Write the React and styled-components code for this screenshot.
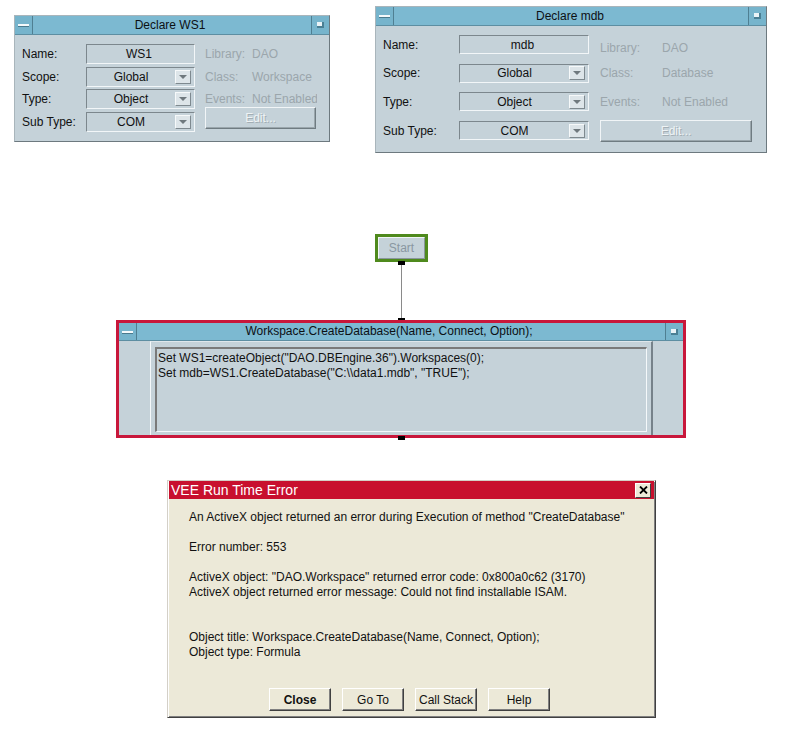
import React from "react";
import styled, { createGlobalStyle } from "styled-components";

const Global = createGlobalStyle`
  html, body { margin: 0; padding: 0; background: #ffffff; }
  * { box-sizing: border-box; }
`;

const Canvas = styled.div`
  position: relative;
  width: 795px;
  height: 746px;
  background: #ffffff;
  overflow: hidden;
  font-family: "Liberation Sans", Arial, sans-serif;
  font-size: 12px;
  color: #101418;
`;

/* Diagram nodes placed on the free VEE canvas */
const Node = styled.div`
  position: absolute;
  left: ${(p) => p.$x}px;
  top: ${(p) => p.$y}px;
  width: ${(p) => p.$w}px;
  height: ${(p) => p.$h}px;
`;

const VeeWindow = styled(Node)`
  display: flex;
  flex-direction: column;
  background: #c5d2d9;
  border: 1px solid;
  border-color: #a9b5bb #6d797f #6d797f #a9b5bb;
`;

const TitleBar = styled.div`
  display: flex;
  align-items: stretch;
  height: ${(p) => p.$h || 19}px;
  flex: none;
  background: #7cb9d1;
  border-bottom: 1px solid #5d8ea2;
`;

const TitleBtn = styled.div`
  width: 18px;
  flex: none;
  display: flex;
  align-items: center;
  justify-content: center;
  background: #76b4cc;
  border-left: ${(p) => (p.$side === "right" ? "1px solid #4f7f92" : "none")};
  border-right: ${(p) => (p.$side === "left" ? "1px solid #4f7f92" : "none")};
`;

const MinusGlyph = styled.span`
  display: block;
  width: 11px;
  height: 2px;
  background: #f4f9fb;
  box-shadow: 0 1px 0 #4a7a8d;
`;

const SquareGlyph = styled.span`
  display: block;
  width: 7px;
  height: 6px;
  background: #e9f3f7;
  border-right: 2px solid #4a7f94;
  border-bottom: 2px solid #4a7f94;
`;

const TitleText = styled.div`
  flex: 1;
  text-align: center;
  line-height: ${(p) => p.$h || 18}px;
  font-size: 12px;
  color: #0c1014;
  white-space: nowrap;
  overflow: hidden;
  padding-right: ${(p) => p.$offset || 0}px;
`;

const DeclareBody = styled.div`
  display: grid;
  grid-template-columns: ${(p) => p.$cols};
  grid-auto-rows: ${(p) => p.$rowH}px;
  row-gap: ${(p) => p.$rowGap}px;
  padding: ${(p) => p.$padTop}px 0 0 7px;
  align-items: center;
`;

const Label = styled.div`
  font-size: 12px;
  color: #111;
  white-space: nowrap;
`;

const Field = styled.div`
  height: 100%;
  display: flex;
  align-items: center;
  border: 1px solid;
  border-color: #7c878d #f2f6f8 #f2f6f8 #7c878d;
  padding-right: 3px;
`;

const FieldText = styled.span`
  flex: 1;
  text-align: center;
  font-size: 12px;
  color: #111;
`;

const DropBtn = styled.span`
  width: 16px;
  height: 14px;
  flex: none;
  display: flex;
  align-items: center;
  justify-content: center;
  background: #dde5e9;
  border: 1px solid;
  border-color: #f6f9fa #7e898f #7e898f #f6f9fa;
`;

const Arrow = styled.span`
  width: 0;
  height: 0;
  border-left: 4px solid transparent;
  border-right: 4px solid transparent;
  border-top: 4px solid #6f797e;
`;

const InfoRow = styled.div`
  display: grid;
  grid-template-columns: ${(p) => p.$labelW}px auto;
  white-space: nowrap;
  overflow: hidden;
  width: ${(p) => p.$w}px;
  color: #9ba6ac;
  font-size: 12px;
  margin-left: ${(p) => p.$ml}px;
  margin-top: ${(p) => p.$mt || 0}px;
`;

const EditBtn = styled.div`
  height: ${(p) => p.$h}px;
  width: ${(p) => p.$w}px;
  margin-left: ${(p) => p.$ml}px;
  margin-top: ${(p) => p.$mt || 0}px;
  align-self: ${(p) => p.$align || "center"};
  display: flex;
  align-items: center;
  justify-content: center;
  border: 1px solid;
  border-color: #f1f5f7 #6f7b81 #6f7b81 #f1f5f7;
  box-shadow: inset -1px -1px 0 #9aa6ac;
  color: #eef3f5;
  text-shadow: 1px 1px 0 #a3aeb4;
  font-size: 12px;
`;

/* Start node */
const StartNode = styled(Node)`
  border: 3px solid #4f8a1d;
  background: #c5d2d9;
  display: flex;
`;

const StartFace = styled.div`
  flex: 1;
  display: flex;
  align-items: center;
  justify-content: center;
  border: 1px solid;
  border-color: #f1f5f7 #8a969c #8a969c #f1f5f7;
  color: #8997a1;
  font-size: 12px;
`;

const Pin = styled(Node)`
  background: #000;
`;

const Wire = styled(Node)`
  background: #8a8a8a;
`;

/* Formula node */
const FormulaNode = styled(Node)`
  border: 3px solid #c8173b;
  background: #c5d2d9;
  display: flex;
  flex-direction: column;
`;

const FormulaBody = styled.div`
  flex: 1;
  display: flex;
  padding: 0 30px 0 31px;
`;

const ContentPanel = styled.div`
  flex: 1;
  display: flex;
  padding: 5px 4px 3px 4px;
  border-left: 1px solid #f4f8fa;
  border-top: 1px solid #dfe7eb;
  border-right: 2px solid #76828a;
`;

const CodeBox = styled.div`
  flex: 1;
  border-top: 2px solid #7a7a7a;
  border-left: 2px solid #7a7a7a;
  border-right: 1px solid #f4f8fa;
  border-bottom: 1px solid #f4f8fa;
  padding: 2px 1px;
`;

const CodeLine = styled.div`
  font-size: 12px;
  line-height: 15px;
  color: #111;
  white-space: pre;
`;

/* Error dialog */
const Dialog = styled(Node)`
  display: flex;
  flex-direction: column;
  background: #ece9d8;
  border: 1px solid;
  border-color: #d4d0c8 #404040 #404040 #d4d0c8;
  box-shadow: inset 1px 1px 0 #ffffff, inset -1px -1px 0 #808080;
  padding: 0 1px 1px 1px;
`;

const DialogTitle = styled.div`
  height: 18px;
  display: flex;
  align-items: center;
  background: #c8102e;
  padding: 0 3px 0 2px;
  flex: none;
`;

const DialogTitleText = styled.div`
  flex: 1;
  color: #ffffff;
  font-size: 14px;
  line-height: 18px;
`;

const CloseX = styled.div`
  width: 16px;
  height: 15px;
  display: flex;
  align-items: center;
  justify-content: center;
  background: #ece9d8;
  border: 1px solid;
  border-color: #ffffff #404040 #404040 #ffffff;
`;

const Message = styled.div`
  flex: 1;
  padding: 11px 0 0 20px;
`;

const MsgLine = styled.div`
  font-size: 12px;
  line-height: 15px;
  height: 15px;
  color: #111;
  white-space: pre;
`;

const ButtonRow = styled.div`
  display: flex;
  justify-content: center;
  gap: 11px;
  padding: 0 4px 5px 0;
`;

const DlgButton = styled.button`
  width: 62px;
  height: 23px;
  padding: 0;
  background: #ece9d8;
  border: 1px solid;
  border-color: #ffffff #404040 #404040 #ffffff;
  box-shadow: inset -1px -1px 0 #808080;
  font-family: "Liberation Sans", Arial, sans-serif;
  font-size: 12px;
  font-weight: ${(p) => (p.$bold ? 700 : 400)};
  color: #111;
`;

function Titled({ title, h, th, offset }) {
  return (
    <TitleBar $h={h}>
      <TitleBtn $side="left">
        <MinusGlyph />
      </TitleBtn>
      <TitleText $h={th} $offset={offset}>{title}</TitleText>
      <TitleBtn $side="right">
        <SquareGlyph />
      </TitleBtn>
    </TitleBar>
  );
}

function DropField({ value }) {
  return (
    <Field>
      <FieldText>{value}</FieldText>
      <DropBtn>
        <Arrow />
      </DropBtn>
    </Field>
  );
}

function DeclarePanel({ cfg }) {
  const {
    x, y, w, h, name, cls, events, labelW, fieldW, infoLabelW, infoW, gap,
    rowH, rowGap, padTop, editW, editH, editAlign, editMt, infoMt, titleOffset,
  } = cfg;
  return (
    <VeeWindow $x={x} $y={y} $w={w} $h={h}>
      <Titled title={`Declare ${name}`} offset={titleOffset} />
      <DeclareBody
        $cols={`${labelW}px ${fieldW}px 1fr`}
        $rowH={rowH}
        $rowGap={rowGap}
        $padTop={padTop}
      >
        <Label>Name:</Label>
        <Field>
          <FieldText>{name}</FieldText>
        </Field>
        <InfoRow $labelW={infoLabelW} $w={infoW} $ml={gap} $mt={infoMt}>
          <span>Library:</span>
          <span>DAO</span>
        </InfoRow>

        <Label>Scope:</Label>
        <DropField value="Global" />
        <InfoRow $labelW={infoLabelW} $w={infoW} $ml={gap}>
          <span>Class:</span>
          <span>{cls}</span>
        </InfoRow>

        <Label>Type:</Label>
        <DropField value="Object" />
        <InfoRow $labelW={infoLabelW} $w={infoW} $ml={gap}>
          <span>Events:</span>
          <span>{events}</span>
        </InfoRow>

        <Label>Sub Type:</Label>
        <DropField value="COM" />
        <EditBtn $w={editW} $h={editH} $ml={gap} $align={editAlign} $mt={editMt}>
          Edit...
        </EditBtn>
      </DeclareBody>
    </VeeWindow>
  );
}

const ws1 = {
  x: 14, y: 15, w: 316, h: 127,
  name: "WS1", cls: "Workspace", events: "Not Enabled",
  labelW: 64, fieldW: 109, infoLabelW: 47, infoW: 112, gap: 10,
  rowH: 20, rowGap: 2.7, padTop: 9,
  editW: 111, editH: 22, editAlign: "start", editMt: -5, infoMt: 0,
  titleOffset: 4,
};

const mdb = {
  x: 375, y: 6, w: 392, h: 147,
  name: "mdb", cls: "Database", events: "Not Enabled",
  labelW: 76, fieldW: 130, infoLabelW: 62, infoW: 150, gap: 11,
  rowH: 19, rowGap: 9.7, padTop: 9,
  editW: 152, editH: 22, editAlign: "center", editMt: 0, infoMt: 6,
  titleOffset: 2,
};

const message = [
  'An ActiveX object returned an error during Execution of method "CreateDatabase"',
  "",
  "Error number: 553",
  "",
  'ActiveX object: "DAO.Workspace" returned error code: 0x800a0c62 (3170)',
  "ActiveX object returned error message: Could not find installable ISAM.",
  "",
  "",
  "Object title: Workspace.CreateDatabase(Name, Connect, Option);",
  "Object type: Formula",
];

export default function App() {
  return (
    <>
      <Global />
      <Canvas>
        <DeclarePanel cfg={ws1} />
        <DeclarePanel cfg={mdb} />

        <StartNode $x={375} $y={234} $w={53} $h={28}>
          <StartFace>Start</StartFace>
        </StartNode>
        <Pin $x={398} $y={261} $w={7} $h={4} />
        <Wire $x={401} $y={265} $w={1} $h={54} />
        <Pin $x={398} $y={318} $w={7} $h={3} />

        <FormulaNode $x={116} $y={320} $w={570} $h={118}>
          <Titled title="Workspace.CreateDatabase(Name, Connect, Option);" h={18} th={17} offset={24} />
          <FormulaBody>
            <ContentPanel>
              <CodeBox>
                <CodeLine>{'Set WS1=createObject("DAO.DBEngine.36").Workspaces(0);'}</CodeLine>
                <CodeLine>{'Set mdb=WS1.CreateDatabase("C:\\\\data1.mdb", "TRUE");'}</CodeLine>
              </CodeBox>
            </ContentPanel>
          </FormulaBody>
        </FormulaNode>
        <Pin $x={398} $y={436} $w={7} $h={4} />

        <Dialog $x={167} $y={480} $w={489} $h={238}>
          <DialogTitle>
            <DialogTitleText>VEE Run Time Error</DialogTitleText>
            <CloseX>
              <svg width="9" height="8" viewBox="0 0 9 8">
                <path d="M1 0.5 L8 7.5 M8 0.5 L1 7.5" stroke="#000" strokeWidth="1.8" />
              </svg>
            </CloseX>
          </DialogTitle>
          <Message>
            {message.map((line, i) => (
              <MsgLine key={i}>{line}</MsgLine>
            ))}
          </Message>
          <ButtonRow>
            <DlgButton $bold>Close</DlgButton>
            <DlgButton>Go To</DlgButton>
            <DlgButton>Call Stack</DlgButton>
            <DlgButton>Help</DlgButton>
          </ButtonRow>
        </Dialog>
      </Canvas>
    </>
  );
}
